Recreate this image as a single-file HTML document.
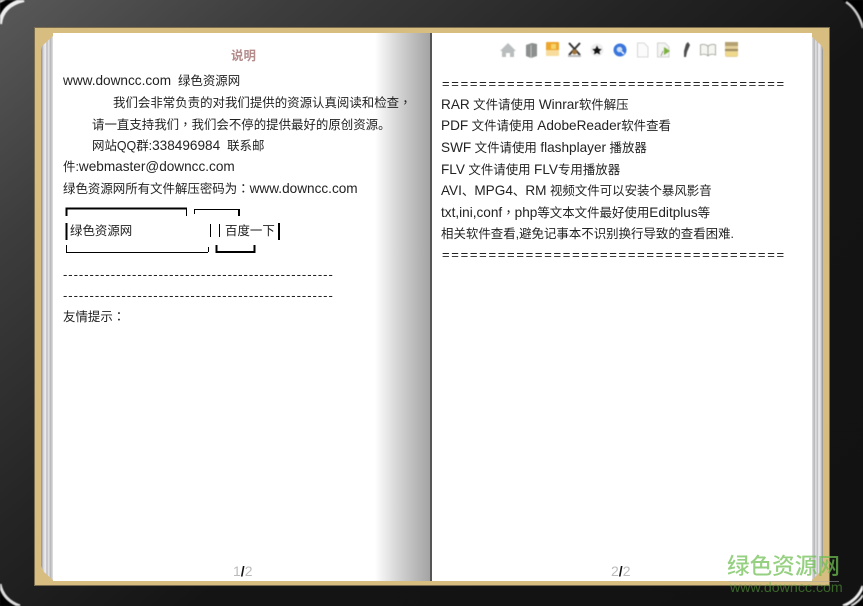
<!DOCTYPE html>
<html>
<head>
<meta charset="utf-8">
<style>
html,body{margin:0;padding:0;background:#000;}
#s{position:relative;width:863px;height:606px;overflow:hidden;background:#000;font-family:"Liberation Sans","Noto Sans CJK SC",sans-serif;}
.abs{position:absolute;}
#shell{left:0;top:0;width:863px;height:606px;background:linear-gradient(140deg,#595959 0,#3d3d3d 18%,#242424 40%,#141414 58%,#121212 100%);}
#frame{left:34px;top:27px;width:796px;height:559px;background:#d8bd80;box-shadow:0 0 0 1px #7a6c4e inset;}
#page{left:53px;top:33px;width:759px;height:548px;background:#fff;}
#shade{left:375px;top:33px;width:55px;height:548px;background:linear-gradient(90deg,#fff 0,#f2f2f2 12%,#d6d6d6 40%,#bcbcbc 70%,#a4a4a4 100%);}
#spine{left:430px;top:33px;width:2px;height:548px;background:#555;}
.t{position:absolute;white-space:nowrap;font-size:12.45px;line-height:18px;color:#222;}
.l{font-size:13.6px;}
.p{font-family:"Noto Sans CJK TC",sans-serif;}
.e{font-size:13px;letter-spacing:1.7px;}
.d{font-size:13px;letter-spacing:.98px;}
</style>
</head>
<body>
<div id="s">
<div class="abs" id="shell"></div>
<svg class="abs" style="left:0;top:0;filter:blur(.5px)" width="863" height="606" viewBox="0 0 863 606" fill="none">
<path d="M0 0H24Q2 5 0 24Z" fill="#000"/>
<path d="M0 24Q2 5 24 0" stroke="#eee" stroke-width="4"/>
<path d="M0 0H6L0 3Z" fill="#ddd"/>
<path d="M863 0H842Q858 8 863 28Z" fill="#000"/>
<path d="M846 2Q858 10 863 28" stroke="#ccc" stroke-width="2.500"/>
<path d="M0 606V584Q3 600 20 606Z" fill="#000"/>
<path d="M0 584Q3 600 20 606" stroke="#ddd" stroke-width="3"/>
<path d="M863 606H842Q858 600 863 584Z" fill="#000"/>
<path d="M843 606Q858 600 863 586" stroke="#eee" stroke-width="3"/>
<path d="M851 606Q860 601 863 595" stroke="#ddd" stroke-width="2"/>
</svg>
<div class="abs" id="frame"></div>

<svg class="abs" style="left:34px;top:27px" width="796" height="559" viewBox="34 27 796 559">
<defs>
<linearGradient id="eg"><stop offset="0" stop-color="#8d8d8d"/><stop offset=".2" stop-color="#d8d8dc"/><stop offset=".35" stop-color="#f0f0f0"/><stop offset=".45" stop-color="#b9b9be"/><stop offset=".6" stop-color="#e6e6e6"/><stop offset=".72" stop-color="#b4b4b8"/><stop offset="1" stop-color="#f4f4f4"/></linearGradient>
<linearGradient id="eh" x1="1" x2="0" y1="0" y2="0"><stop offset="0" stop-color="#8d8d8d"/><stop offset=".2" stop-color="#d8d8dc"/><stop offset=".35" stop-color="#f0f0f0"/><stop offset=".45" stop-color="#b9b9be"/><stop offset=".6" stop-color="#e6e6e6"/><stop offset=".72" stop-color="#b4b4b8"/><stop offset="1" stop-color="#f4f4f4"/></linearGradient>
</defs>
<path d="M41 50 L42 46 L53 36 L54 581 L44 572 L41 566Z" fill="url(#eg)"/>
<path d="M823 50 L822 46 L811 36 L811 581 L820 572 L823 566Z" fill="url(#eh)"/>
</svg>

<div class="abs" id="page"></div>
<div class="abs" id="shade"></div>
<div class="abs" id="spine"></div>

<div class="t" style="left:231px;top:47px;font-weight:bold;color:#b48c8c;">说明</div>
<div class="t" style="left:63px;top:72px"><span class="l">www.downcc.com</span>&nbsp;&nbsp;绿色资源网</div>
<div class="t" style="left:113px;top:93px">我们会非常负责的对我们提供的资源认真阅读和检查<span class="p">，</span></div>
<div class="t" style="left:92px;top:115px">请一直支持我们<span class="p">，</span>我们会不停的提供最好的原创资源。</div>
<div class="t" style="left:92px;top:137px">网站QQ群:<span class="l">338496984</span>&nbsp;&nbsp;联系邮</div>
<div class="t" style="left:63px;top:158px">件:<span class="l">webmaster@downcc.com</span></div>
<div class="t" style="left:63px;top:179px">绿色资源网所有文件解压密码为<span class="p">：</span><span class="l">www.downcc.com</span></div>

<svg class="abs" style="left:60px;top:205px" width="230" height="52" viewBox="60 205 230 52" fill="none" stroke="#000" shape-rendering="crispEdges">
<path d="M66.500 216V208.500H187" stroke-width="2"/><path d="M186.500 208V216" stroke-width="1"/>
<path d="M194.500 214V209.500H239" stroke-width="1"/><path d="M239 209V216" stroke-width="2"/>
<path d="M66.500 223V240" stroke-width="2"/>
<path d="M210.500 224V237M219.500 224V237" stroke-width="1"/>
<path d="M279 223V240" stroke-width="2"/>
<path d="M66.500 245V252.500H208" stroke-width="1"/><path d="M208.500 247V252" stroke-width="1"/>
<path d="M216.500 245V252H254.500V245" stroke-width="2"/>
</svg>
<div class="t" style="left:70px;top:222px">绿色资源网</div>
<div class="t" style="left:225px;top:222px">百度一下</div>

<div class="t d" style="left:63px;top:266px">---------------------------------------------------</div>
<div class="t d" style="left:63px;top:287px">---------------------------------------------------</div>
<div class="t" style="left:63px;top:307px">友情提示<span class="p">：</span></div>

<svg class="abs" style="left:498px;top:40px;filter:blur(.4px)" width="245" height="20" viewBox="498 40 245 20">
<path d="M508 43 L516 51 L514 51 L514 57 L510 57 L510 53 L506 53 L506 57 L502 57 L502 51 L500 51Z" fill="#b9bdbd"/>
<path d="M526 45 L532 43 L537 44 V56 L531 58 L526 56Z" fill="#8b8f8e"/><path d="M531 45V58" stroke="#c4c4c4" fill="none"/>
<rect x="546" y="42" width="13" height="14" rx="1" fill="#eda52c"/><rect x="546" y="50" width="13" height="6" fill="#f7dc9b"/><rect x="551" y="44" width="5" height="5" fill="#f6d46c"/>
<path d="M569 43 L580 55 M580 43 L569 55" stroke="#333" stroke-width="2" fill="none"/><circle cx="574.500" cy="52" r="2.500" fill="#a2743a"/><rect x="568" y="55" width="13" height="2" fill="#bbb"/>
<circle cx="597" cy="50" r="6.500" fill="#eee"/><path d="M597 45.500 L598.500 48.800 L601.800 49.200 L599.300 51.300 L600 54.500 L597 52.900 L594 54.500 L594.700 51.300 L592.200 49.200 L595.500 48.800Z" fill="#111"/>
<circle cx="620" cy="50" r="6.500" fill="#3a76dc"/><circle cx="619.500" cy="49.500" r="2.800" fill="#cfe0f7"/><path d="M621.500 51.500L624 54" stroke="#fff" stroke-width="1.500"/>
<path d="M637.500 43 H644 L648 47 V57 H637.500Z" fill="#fbfbfb" stroke="#ccc" stroke-width=".8"/>
<path d="M657.500 43 H665 L669 47 V57 H657.500Z" fill="#f4f4f2" stroke="#c6c6c6" stroke-width=".8"/><path d="M664 47 L670 51 L664 55Z" fill="#7bb03e"/><path d="M661 56 L663 51" stroke="#999" fill="none"/>
<path d="M688 42 L690 45 L687 52 L686 57 L684 57 L684 51 L686 44Z" fill="#4d4d4d"/>
<path d="M708 46 C705 44 702 44 700.500 45 L700.500 55 C703 54 706 54 708 56 C710 54 713 54 715.500 55 L715.500 45 C714 44 711 44 708 46Z" fill="#f5f5f2" stroke="#9a9a92" stroke-width=".8"/><path d="M708 46V56" stroke="#9a9a92" stroke-width=".8"/>
<rect x="725" y="42" width="13" height="15" rx="2" fill="#e3cf9a"/><rect x="725" y="42" width="13" height="4" fill="#b4a173"/><rect x="725" y="49" width="13" height="2" fill="#9d8b5e"/><rect x="726" y="52" width="11" height="4" fill="#efd98a"/>
</svg>

<div class="t e" style="left:442px;top:75px">=====================================</div>
<div class="t" style="left:441px;top:96px"><span class="l">RAR</span> 文件请使用 <span class="l">Winrar</span>软件解压</div>
<div class="t" style="left:441px;top:117px"><span class="l">PDF</span> 文件请使用 <span class="l">AdobeReader</span>软件查看</div>
<div class="t" style="left:441px;top:139px"><span class="l">SWF</span> 文件请使用 <span class="l">flashplayer</span> 播放器</div>
<div class="t" style="left:441px;top:161px"><span class="l">FLV</span> 文件请使用 <span class="l">FLV</span>专用播放器</div>
<div class="t" style="left:441px;top:182px"><span class="l">AVI</span>、<span class="l">MPG4</span>、<span class="l">RM</span> 视频文件可以安装个暴风影音</div>
<div class="t" style="left:441px;top:203px"><span class="l">txt,ini,conf</span><span class="p">，</span><span class="l">php</span>等文本文件最好使用<span class="l">Editplus</span>等</div>
<div class="t" style="left:441px;top:225px">相关软件查看,避免记事本不识别换行导致的查看困难.</div>
<div class="t e" style="left:442px;top:246px">=====================================</div>

<div class="t" style="left:233px;top:562px;font-size:14px;color:#bbb">1<span style="color:#111;font-weight:bold">/</span>2</div>
<div class="t" style="left:611px;top:562px;font-size:14px;color:#bbb">2<span style="color:#111;font-weight:bold">/</span>2</div>

<div class="t" style="left:727px;top:551px;font-size:22.600px;line-height:32px;color:rgba(110,190,80,.72);font-weight:500">绿色资源网</div>
<div class="abs" style="left:729px;top:581px;width:110px;height:1px;background:rgba(170,170,170,.5)"></div>
<div class="t" style="left:730px;top:580px;font-size:14.200px;line-height:16px;color:rgba(90,170,60,.55)">www.downcc.com</div>
</div>
</body>
</html>
